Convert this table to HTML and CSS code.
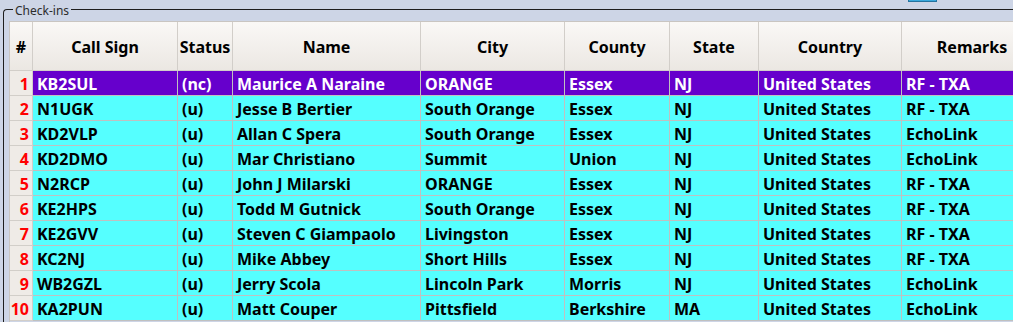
FILE: index.html
```html
<!DOCTYPE html>
<html>
<head>
<meta charset="utf-8">
<link rel="stylesheet" href="styles.css">
</head>
<body>
<div class="topbtn"></div>
<div class="groupbox">
  <div class="gtitle">Check-ins</div>
  <div class="table">
    <div class="row head">
      <div class="c c0">#</div><div class="c c1">Call Sign</div><div class="c c2">Status</div><div class="c c3">Name</div><div class="c c4">City</div><div class="c c5">County</div><div class="c c6">State</div><div class="c c7">Country</div><div class="c c8">Remarks</div>
    </div>
    <div class="row sel">
      <div class="c c0">1</div><div class="c c1">KB2SUL</div><div class="c c2">(nc)</div><div class="c c3">Maurice A Naraine</div><div class="c c4">ORANGE</div><div class="c c5">Essex</div><div class="c c6">NJ</div><div class="c c7">United States</div><div class="c c8">RF - TXA</div>
    </div>
    <div class="row">
      <div class="c c0">2</div><div class="c c1">N1UGK</div><div class="c c2">(u)</div><div class="c c3">Jesse B Bertier</div><div class="c c4">South Orange</div><div class="c c5">Essex</div><div class="c c6">NJ</div><div class="c c7">United States</div><div class="c c8">RF - TXA</div>
    </div>
    <div class="row">
      <div class="c c0">3</div><div class="c c1">KD2VLP</div><div class="c c2">(u)</div><div class="c c3">Allan C Spera</div><div class="c c4">South Orange</div><div class="c c5">Essex</div><div class="c c6">NJ</div><div class="c c7">United States</div><div class="c c8">EchoLink</div>
    </div>
    <div class="row">
      <div class="c c0">4</div><div class="c c1">KD2DMO</div><div class="c c2">(u)</div><div class="c c3">Mar Christiano</div><div class="c c4">Summit</div><div class="c c5">Union</div><div class="c c6">NJ</div><div class="c c7">United States</div><div class="c c8">EchoLink</div>
    </div>
    <div class="row">
      <div class="c c0">5</div><div class="c c1">N2RCP</div><div class="c c2">(u)</div><div class="c c3">John J Milarski</div><div class="c c4">ORANGE</div><div class="c c5">Essex</div><div class="c c6">NJ</div><div class="c c7">United States</div><div class="c c8">RF - TXA</div>
    </div>
    <div class="row">
      <div class="c c0">6</div><div class="c c1">KE2HPS</div><div class="c c2">(u)</div><div class="c c3">Todd M Gutnick</div><div class="c c4">South Orange</div><div class="c c5">Essex</div><div class="c c6">NJ</div><div class="c c7">United States</div><div class="c c8">RF - TXA</div>
    </div>
    <div class="row">
      <div class="c c0">7</div><div class="c c1">KE2GVV</div><div class="c c2">(u)</div><div class="c c3">Steven C Giampaolo</div><div class="c c4">Livingston</div><div class="c c5">Essex</div><div class="c c6">NJ</div><div class="c c7">United States</div><div class="c c8">RF - TXA</div>
    </div>
    <div class="row">
      <div class="c c0">8</div><div class="c c1">KC2NJ</div><div class="c c2">(u)</div><div class="c c3">Mike Abbey</div><div class="c c4">Short Hills</div><div class="c c5">Essex</div><div class="c c6">NJ</div><div class="c c7">United States</div><div class="c c8">RF - TXA</div>
    </div>
    <div class="row">
      <div class="c c0">9</div><div class="c c1">WB2GZL</div><div class="c c2">(u)</div><div class="c c3">Jerry Scola</div><div class="c c4">Lincoln Park</div><div class="c c5">Morris</div><div class="c c6">NJ</div><div class="c c7">United States</div><div class="c c8">EchoLink</div>
    </div>
    <div class="row">
      <div class="c c0">10</div><div class="c c1">KA2PUN</div><div class="c c2">(u)</div><div class="c c3">Matt Couper</div><div class="c c4">Pittsfield</div><div class="c c5">Berkshire</div><div class="c c6">MA</div><div class="c c7">United States</div><div class="c c8">EchoLink</div>
    </div>
  </div>
</div>
</body>
</html>
```
FILE: styles.css
```css
html, body {
  margin: 0;
  padding: 0;
}
body {
  width: 1013px;
  height: 322px;
  overflow: hidden;
  background: #cdd5e6;
  font-family: "Noto Sans", "Open Sans", sans-serif;
  position: relative;
}
.topbtn {
  position: absolute;
  left: 908px;
  top: -10px;
  width: 27px;
  height: 10px;
  background: #3aa8dc;
  border: 1px solid #25739f;
}
.groupbox {
  position: relative;
  box-sizing: border-box;
  margin: 9px 0 0 3px;
  border-top: 1px solid #1e1e1e;
  border-left: 1px solid #1e1e1e;
  border-top-left-radius: 4px;
  padding: 11px 0 0 5px;
  height: 313px;
}
.gtitle {
  position: absolute;
  left: 9px;
  top: -7px;
  padding: 0 2px;
  background: #cdd5e6;
  color: #2c2c2c;
  font-size: 12px;
  line-height: 16px;
}
.table {
  overflow: hidden;
  height: 301px;
  border-top: 1px solid #c9c5c1;
  border-left: 1px solid #c9c5c1;
}
.row {
  display: flex;
  height: 25px;
  background: #55ffff;
  color: #000;
}
.c {
  box-sizing: border-box;
  flex: none;
  border-right: 1px solid #c0c0c0;
  border-bottom: 1px solid #c0c0c0;
  font-weight: bold;
  font-size: 16px;
  padding: 2px 0 0 4px;
  display: flex;
  align-items: center;
  white-space: nowrap;
  overflow: hidden;
}
.c0 { width: 23px; }
.c1 { width: 145px; }
.c2 { width: 55px; }
.c3 { width: 188px; }
.c4 { width: 144px; }
.c5 { width: 105px; }
.c6 { width: 89px; }
.c7 { width: 143px; }
.c8 { width: 141px; }

.row .c0 {
  background: #efebe7;
  color: #ff0000;
  justify-content: flex-end;
  padding: 2px 3px 0 0;
  border-color: #d2cec9;
}
.row.sel {
  background: #6600cc;
  color: #ffffff;
}
.row.head {
  height: 49px;
  background: linear-gradient(#faf8f6, #ebe7e2);
}
.row.head .c {
  justify-content: center;
  padding: 2px 0 0 0;
  border-color: #d2cec9;
  color: #000;
}
.row.head .c0 {
  background: transparent;
}
```
